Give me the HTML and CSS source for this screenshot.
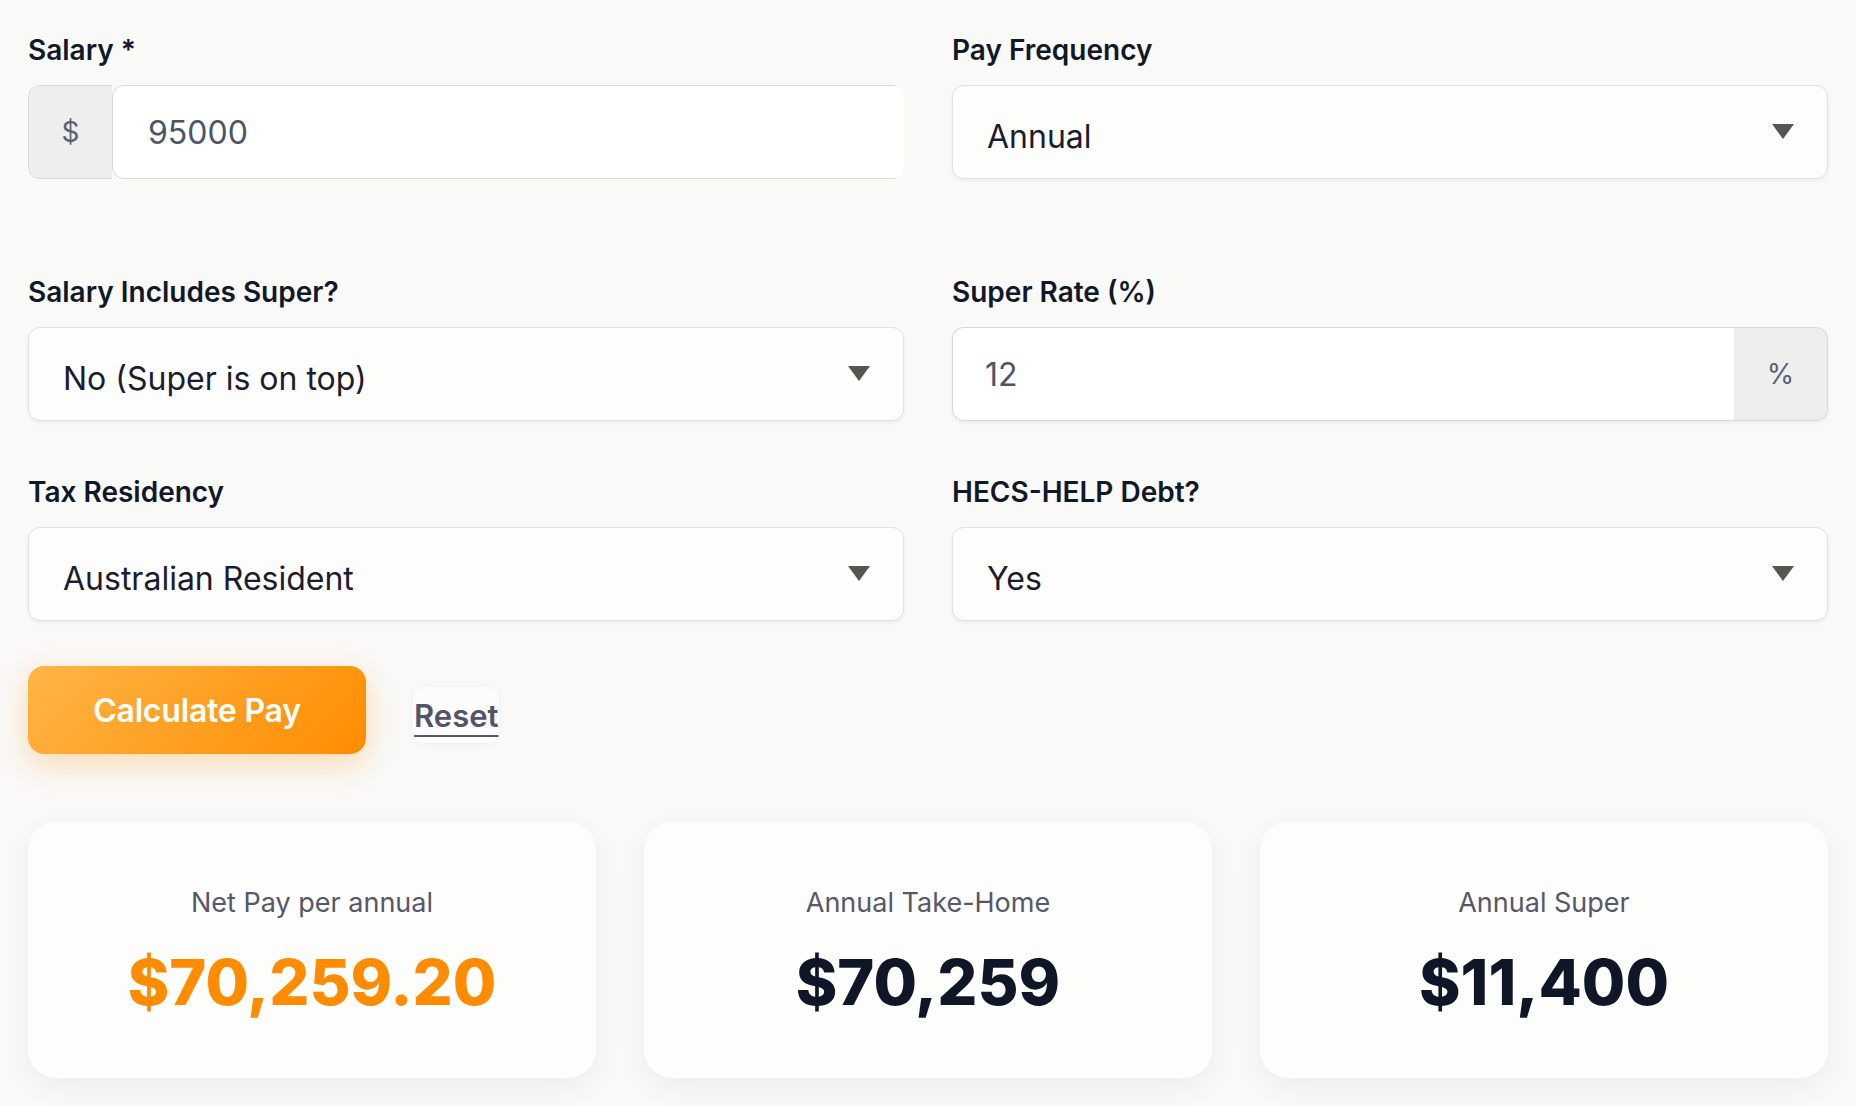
FILE: index.html
```html
<!DOCTYPE html>
<html lang="en">

<head>
    <meta charset="UTF-8">
    <meta name="viewport" content="width=device-width, initial-scale=1.0">
    <title>Pay Calculator</title>
    <link rel="stylesheet" href="styles.css">
</head>

<body>

    <main class="calculator">
        <form class="calc-form">
            <div class="form-grid">
                <div class="field field--first">
                    <label class="field-label" for="salary">Salary *</label>
                    <div class="input-group input-group--clip">
                        <span class="addon addon--left">$</span>
                        <input class="text-input text-input--wide" id="salary" type="text" value="95000">
                    </div>
                </div>

                <div class="field field--first">
                    <label class="field-label" for="frequency">Pay Frequency</label>
                    <div class="select-wrap">
                        <select class="select" id="frequency">
                            <option>Annual</option>
                            <option>Monthly</option>
                            <option>Fortnightly</option>
                            <option>Weekly</option>
                        </select>
                    </div>
                </div>

                <div class="field">
                    <label class="field-label" for="includes-super">Salary Includes Super?</label>
                    <div class="select-wrap">
                        <select class="select" id="includes-super">
                            <option>No (Super is on top)</option>
                            <option>Yes (Super is included)</option>
                        </select>
                    </div>
                </div>

                <div class="field">
                    <label class="field-label" for="super-rate">Super Rate (%)</label>
                    <div class="input-group">
                        <input class="text-input text-input--left" id="super-rate" type="text" value="12">
                        <span class="addon addon--right">%</span>
                    </div>
                </div>

                <div class="field">
                    <label class="field-label" for="residency">Tax Residency</label>
                    <div class="select-wrap">
                        <select class="select" id="residency">
                            <option>Australian Resident</option>
                            <option>Foreign Resident</option>
                            <option>Working Holiday Maker</option>
                        </select>
                    </div>
                </div>

                <div class="field">
                    <label class="field-label" for="hecs">HECS-HELP Debt?</label>
                    <div class="select-wrap">
                        <select class="select" id="hecs">
                            <option>Yes</option>
                            <option>No</option>
                        </select>
                    </div>
                </div>
            </div>

            <div class="actions">
                <button class="btn-calc" type="button">Calculate Pay</button>
                <button class="btn-reset" type="reset">Reset</button>
            </div>
        </form>

        <section class="results">
            <div class="result-card">
                <p class="result-label">Net Pay per annual</p>
                <p class="result-value result-value--accent">$70,259.20</p>
            </div>
            <div class="result-card">
                <p class="result-label">Annual Take-Home</p>
                <p class="result-value">$70,259</p>
            </div>
            <div class="result-card">
                <p class="result-label">Annual Super</p>
                <p class="result-value">$11,400</p>
            </div>
        </section>
    </main>

</body>

</html>
```

FILE: styles.css
```css
body {
    margin: 0;
    background: #f9f9f7;
    font-family: "Inter", "Noto Sans", sans-serif;
    color: #111827;
}

.calculator {
    padding: 33px 28px 28px;
}

/* form grid */
.form-grid {
    display: grid;
    grid-template-columns: 1fr 1fr;
    column-gap: 48px;
    row-gap: 54px;
}

.field--first {
    margin-bottom: 42px;
}

.field-label {
    display: block;
    margin-bottom: 18px;
    font-size: 28px;
    line-height: 34px;
    font-weight: 600;
    color: #111827;
}

/* inputs with addon */
.input-group {
    display: flex;
    height: 94px;
    border-radius: 12px;
    box-shadow: 0 2px 4px rgba(0, 0, 0, 0.05);
}

.input-group--clip {
    overflow: hidden;
    box-shadow: none;
}

.addon {
    flex: none;
    display: flex;
    align-items: center;
    justify-content: center;
    background: #eeeeed;
    border: 1.5px solid #d9d9dc;
    font-size: 28px;
    color: #5b6275;
    box-sizing: border-box;
}

.addon--left {
    width: 84px;
    border-right: none;
    border-radius: 12px 0 0 12px;
}

.addon--right {
    width: 94px;
    border-left: none;
    border-radius: 0 12px 12px 0;
}

.text-input {
    flex: 1;
    min-width: 0;
    height: 100%;
    box-sizing: border-box;
    padding: 0 32px;
    background: #fff;
    border: 1.5px solid #d5d8df;
    border-radius: 12px;
    font-family: inherit;
    font-size: 32px;
    color: #4a5568;
    outline: none;
}

.text-input--wide {
    flex: none;
    width: calc(100% - 84px + 20px);
    padding-left: 35px;
}

.text-input--left {
    border-right: none;
    border-radius: 12px 0 0 12px;
}

/* selects */
.select-wrap {
    position: relative;
}

.select-wrap::after {
    content: "";
    position: absolute;
    right: 34px;
    top: 50%;
    margin-top: -8px;
    border-left: 11px solid transparent;
    border-right: 11px solid transparent;
    border-top: 15px solid #555;
    pointer-events: none;
}

.select {
    display: block;
    width: 100%;
    height: 94px;
    box-sizing: border-box;
    padding: 8px 34px 0;
    background: #fdfdfb;
    border: 1.5px solid #e1e1df;
    border-radius: 12px;
    box-shadow: 0 2px 4px rgba(0, 0, 0, 0.05);
    appearance: none;
    -webkit-appearance: none;
    font-family: inherit;
    font-size: 32px;
    color: #1c1c2e;
    outline: none;
}

/* buttons */
.actions {
    display: flex;
    align-items: center;
    gap: 47px;
    margin-top: 45px;
}

.btn-calc {
    height: 88px;
    width: 338px;
    border: none;
    border-radius: 16px;
    background: linear-gradient(135deg, #ffb547 0%, #ff8c00 100%);
    box-shadow: 0 10px 30px rgba(255, 146, 20, 0.3);
    font-family: inherit;
    font-size: 32px;
    font-weight: 600;
    letter-spacing: -0.2px;
    color: #fff;
    cursor: pointer;
}

.btn-reset {
    margin-top: 9px;
    padding: 10px 1px 9px;
    border: none;
    border-radius: 10px;
    background: #fcfcfa;
    box-shadow: 0 2px 8px rgba(0, 0, 0, 0.04);
    font-family: inherit;
    font-size: 31px;
    font-weight: 600;
    color: #545468;
    text-decoration: underline;
    text-decoration-thickness: 2px;
    text-underline-offset: 8px;
    cursor: pointer;
}

/* result cards */
.results {
    display: grid;
    grid-template-columns: repeat(3, 1fr);
    gap: 48px;
    margin-top: 68px;
}

.result-card {
    padding: 62px 24px 58px;
    background: #fdfdfb;
    border-radius: 28px;
    box-shadow: 0 10px 30px rgba(0, 0, 0, 0.05);
    text-align: center;
}

.result-label {
    margin: 0 0 22px;
    font-size: 27px;
    line-height: 38px;
    color: #575769;
}

.result-value {
    margin: 0;
    font-size: 63px;
    line-height: 76px;
    font-weight: 800;
    color: #0e1628;
}

.result-value--accent {
    color: #ff8c00;
}
```
